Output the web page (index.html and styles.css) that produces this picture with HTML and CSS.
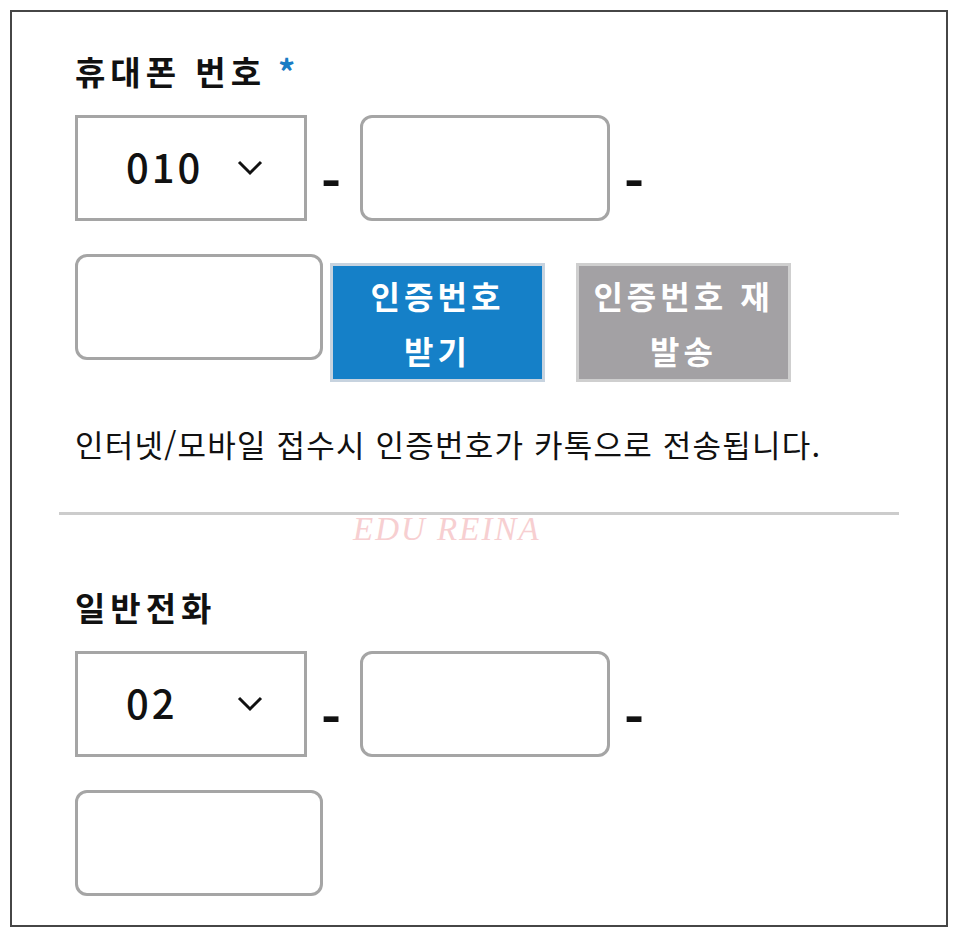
FILE: index.html
```html
<!DOCTYPE html>
<html lang="ko">
	<head>
		<meta charset="utf-8">
		<title>전화번호 입력</title>
		<link rel="stylesheet" href="styles.css">
	</head>

	<body>
		<div class = "frame">
			<!--Mobile phone-->
			<div class = "field mobile">
				<h2 class = "label">휴대폰 번호<span class = "req">*</span></h2>
				<div class = "phoneRow">
					<div class = "prefix">
						<span class = "prefixValue">010</span>
						<svg class = "chev" width = "28" height = "18" viewBox = "0 0 28 18">
							<polyline points = "3,4 14,15 25,4" fill = "none" stroke = "#111" stroke-width = "3"/>
						</svg>
					</div>
					<span class = "dash">-</span>
					<input class = "box" type = "text">
					<span class = "dash">-</span>
				</div>
				<div class = "phoneRow second">
					<input class = "box small" type = "text">
					<button class = "btn send">인증번호<br>받기</button>
					<button class = "btn resend">인증번호 재<br>발송</button>
				</div>
				<p class = "hint">인터넷/모바일 접수시 인증번호가 카톡으로 전송됩니다.</p>
			</div>

			<hr class = "divider">
			<div class = "mark">EDU REINA</div>

			<!--Landline-->
			<div class = "field landline">
				<h2 class = "label">일반전화</h2>
				<div class = "phoneRow">
					<div class = "prefix">
						<span class = "prefixValue">02</span>
						<svg class = "chev" width = "28" height = "18" viewBox = "0 0 28 18">
							<polyline points = "3,4 14,15 25,4" fill = "none" stroke = "#111" stroke-width = "3"/>
						</svg>
					</div>
					<span class = "dash">-</span>
					<input class = "box" type = "text">
					<span class = "dash">-</span>
				</div>
				<div class = "phoneRow second">
					<input class = "box small" type = "text">
				</div>
			</div>
		</div>
	</body>
</html>
```

FILE: styles.css
```css
body {
	margin: 0;
	background-color: #fff;
	font-family: "Noto Sans CJK KR", "Noto Sans", sans-serif;
	color: #111;
}

.frame {
	position: relative;
	box-sizing: border-box;
	margin: 10px 0 0 10px;
	width: 938px;
	height: 917px;
	border: 2px solid #464646;
	padding: 0 0 0 63px;
}

.label {
	margin: 0;
	font-size: 33px;
	font-weight: bold;
	line-height: 44px;
	letter-spacing: 5px;
}

.mobile .label {
	margin-top: 37px;
}

.landline .label {
	margin-top: 70px;
}

.req {
	color: #1a7cc4;
	font-size: 34px;
	margin-left: 12px;
}

/*Phone rows*/
.phoneRow {
	display: flex;
	align-items: flex-start;
	margin-top: 22px;
}

.phoneRow.second {
	margin-top: 33px;
}

.prefix {
	box-sizing: border-box;
	width: 232px;
	height: 106px;
	border: 3px solid #a5a5a5;
	display: flex;
	align-items: center;
	padding-left: 48px;
}

.prefixValue {
	font-size: 40px;
	font-weight: 500;
	letter-spacing: 3px;
	width: 110px;
	margin-top: -4px;
}

.chev {
	margin-top: -2px;
}

.dash {
	box-sizing: border-box;
	font-size: 54px;
	font-weight: bold;
	width: 53px;
	padding-right: 5px;
	text-align: center;
	line-height: 50px;
	margin-top: 41px;
}

.box {
	box-sizing: border-box;
	width: 250px;
	height: 106px;
	border: 3px solid #a5a5a5;
	border-radius: 12px;
	background-color: #fff;
	outline: none;
}

.box.small {
	width: 248px;
}

/*Buttons*/
.btn {
	box-sizing: border-box;
	width: 215px;
	height: 119px;
	margin-top: 9px;
	border: 3px solid #c7d3df;
	color: #fff;
	font-family: "Noto Sans CJK KR", "Noto Sans", sans-serif;
	font-size: 32px;
	font-weight: bold;
	line-height: 55px;
	letter-spacing: 4px;
	padding: 0;
}

.send {
	margin-left: 7px;
	background-color: #1580c8;
}

.resend {
	margin-left: 31px;
	background-color: #a3a1a4;
	border-color: #cfcfcf;
}

.hint {
	margin: 42px 0 0 0;
	font-size: 31px;
	line-height: 40px;
	letter-spacing: 1.2px;
}

.divider {
	margin: 48px 0 0 -16px;
	width: 840px;
	border: none;
	height: 3px;
	background-color: #cccccc;
}

/*Watermark*/
.mark {
	position: absolute;
	left: 341px;
	top: 499px;
	font-family: "Liberation Serif", serif;
	font-style: italic;
	font-size: 33px;
	letter-spacing: 2px;
	color: #f7cfd1;
}
```
